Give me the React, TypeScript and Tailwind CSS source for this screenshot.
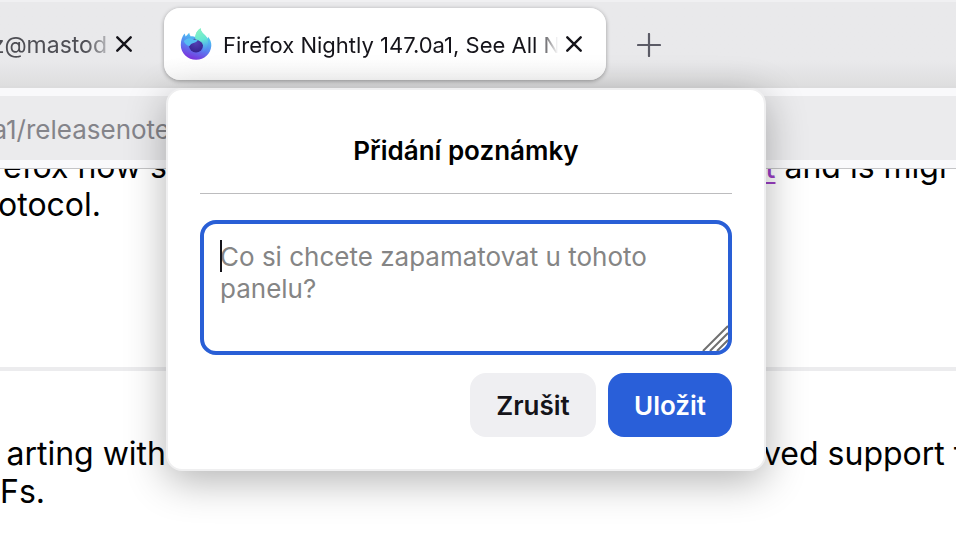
import React, { useState } from "react";

function FirefoxLogo() {
  return (
    <svg viewBox="0 0 32 32" className="h-8 w-8 shrink-0" aria-hidden="true">
      <defs>
        <linearGradient id="ring" x1="0.8" y1="0" x2="0.45" y2="1">
          <stop offset="0" stopColor="#62ecd0" />
          <stop offset="0.35" stopColor="#4fb8f2" />
          <stop offset="0.65" stopColor="#5a7df0" />
          <stop offset="1" stopColor="#7b34dd" />
        </linearGradient>
        <linearGradient id="flame" x1="0.4" y1="0" x2="0.6" y2="1">
          <stop offset="0" stopColor="#8af5c0" />
          <stop offset="0.5" stopColor="#66e6d4" />
          <stop offset="1" stopColor="#4a9cf5" stopOpacity="0.2" />
        </linearGradient>
        <radialGradient id="globe" cx="0.5" cy="0.3" r="0.75">
          <stop offset="0" stopColor="#5340b4" />
          <stop offset="1" stopColor="#33208c" />
        </radialGradient>
      </defs>
      <path
        d="M4.500 5.500c.5 1 .9 2 1.100 3C6.700 7.400 8 6 9.200 4.800c.2 1.500.7 2.700 1.600 3.600 1.600-.2 3.100 0 4.600.5.2-3.400 2-6.700 5.200-8.700.2 3.200 2.200 5 4.400 7 1.200 1.100 2 2.300 2.500 3.500l.5-2c2.200 2.400 3.600 5.600 3.300 9.400C30.700 26 24.300 31.800 16.200 31.800 7.600 31.800.8 25.300.8 17c0-4.600 1.200-8.500 3.700-11.500z"
        fill="url(#ring)"
      />
      <circle cx="16" cy="17.500" r="7" fill="url(#globe)" />
      <path
        d="M20.600.2c.2 3.200 2.200 5 4.400 7 3.800 3.700 4.200 9.800.2 14.800-1.200 1.400-2.400 2-3.400 2.300 1.700-2.200 2-5 1-7.500-1.300-3.200-4-4.600-7.400-5.200-.8-3.700.6-8.700 5.200-11.400z"
        fill="url(#flame)"
      />
      <path
        d="M3.800 13c2.700-2.800 6-3.800 9.500-1.800 1.500.8 3.200.9 4.500.6-.3 1.800-2.200 2.700-4.300 3.100-2 .4-3 1.300-4 3.100-2.700-.5-4.900-2.300-5.700-5z"
        fill="#56bdf2"
      />
    </svg>
  );
}

function CloseIcon() {
  return (
    <svg
      viewBox="0 0 16 16"
      className="h-4 w-4"
      fill="none"
      stroke="#15141a"
      strokeWidth="2.4"
      strokeLinecap="round"
      aria-hidden="true"
    >
      <path d="M1.300 1.300l13.400 13.400M14.700 1.300L1.300 14.700" />
    </svg>
  );
}

function PlusIcon() {
  return (
    <svg
      viewBox="0 0 24 24"
      className="h-6 w-6"
      fill="none"
      stroke="#5b5b66"
      strokeWidth="2.200"
      strokeLinecap="round"
      aria-hidden="true"
    >
      <path d="M12 1v22M1 12h22" />
    </svg>
  );
}

function TabBar() {
  return (
    <div className="flex h-[88px] items-center border-y-2 border-t-[#f0f0f2] border-b-[#dcdcdd] bg-linear-to-b from-[#e9e9eb] from-70% to-[#dededf]">
      <div className="flex w-[164px] shrink-0 items-center">
        <div className="flex w-[107px] justify-end overflow-hidden pt-0.5 whitespace-nowrap mask-r-from-80% mask-r-to-110% text-[23px] text-[#4e4e54]">
          z@mastod
        </div>
        <button aria-label="Zavřít panel" className="ml-2 p-px">
          <CloseIcon />
        </button>
      </div>
      <div className="flex h-[72px] w-[442px] shrink-0 items-center rounded-2xl bg-linear-to-b from-white from-70% to-[#f8f8f8] pl-4 shadow-[0_1px_4px_rgba(0,0,0,0.35)]">
        <FirefoxLogo />
        <div className="ml-[11px] w-[335px] overflow-hidden pt-0.5 whitespace-nowrap mask-r-from-94% text-[22px] text-[#15141a]">
          Firefox Nightly 147.0a1, See All N
        </div>
        <button aria-label="Zavřít panel" className="ml-2">
          <CloseIcon />
        </button>
      </div>
      <button aria-label="Nový panel" className="ml-[31px] pt-0.5">
        <PlusIcon />
      </button>
    </div>
  );
}

function AddressBar() {
  return (
    <div className="border-b border-[#c4c4c6] bg-[#f9f9fb] py-2">
      <div className="flex h-16 items-center bg-[#ebebed] pt-0.5">
        <div className="flex w-[170px] justify-end overflow-hidden whitespace-nowrap text-[26px] text-[#84848a]">
          a1/releasenote
        </div>
      </div>
    </div>
  );
}

function ReleaseNotes() {
  return (
    <main className="overflow-hidden text-[32px] leading-[38px] whitespace-nowrap text-black">
      <section className="-mt-[21px] h-[223px] border-b-4 border-[#ececee]">
        <div className="flex">
          <p className="flex w-[167px] shrink-0 justify-end">efox now s</p>
          <p className="ml-[598px]">
            <a
              href="#support"
              className="text-[#9a3fc4] underline decoration-2 underline-offset-4"
            >
              t
            </a>{" "}
            and is migr
          </p>
        </div>
        <p className="flex w-[101px] justify-end">otocol.</p>
      </section>
      <section className="pt-[64px]">
        <div className="flex">
          <p className="flex w-[166px] shrink-0 justify-end">arting with</p>
          <p className="ml-[597px]">ved support f</p>
        </div>
        <p className="flex w-[45px] justify-end">Fs.</p>
      </section>
    </main>
  );
}

function NotePanel() {
  const [note, setNote] = useState("");

  return (
    <div
      role="dialog"
      aria-labelledby="note-title"
      className="absolute top-[88px] left-[166px] w-[600px] rounded-2xl border-2 border-[#efeff0] bg-white px-8 pb-8 shadow-[0_10px_40px_rgba(0,0,0,0.3)]"
    >
      <h1
        id="note-title"
        className="border-b border-[#bcbcbe] pt-[45px] pb-[26px] text-center text-[26px] leading-8 font-semibold text-black"
      >
        Přidání poznámky
      </h1>
      <div className="relative mt-[26px]">
        <textarea
          aria-labelledby="note-title"
          value={note}
          onChange={(e) => setNote(e.target.value)}
          placeholder="Co si chcete zapamatovat u tohoto panelu?"
          className="block h-[135px] w-full resize-none rounded-2xl border-4 border-[#295fd6] bg-white px-4 py-[17px] text-[26px] leading-8 text-[#15141a] outline-none placeholder:text-[#858585]"
        />
        {/* text caret */}
        <span className="absolute top-5 left-5 h-8 w-0.5 bg-[#15141a]" />
        <svg
          viewBox="0 0 26 26"
          className="absolute right-1 bottom-1 h-[26px] w-[26px]"
          fill="none"
          stroke="#707070"
          strokeWidth="2"
          aria-hidden="true"
        >
          <path d="M1 26L26 1M8 26L26 8M15 26L26 15" />
        </svg>
      </div>
      <div className="mt-[18px] flex justify-end gap-3 text-[26px] font-semibold">
        <button className="h-16 w-[126px] rounded-2xl bg-[#efeff2] text-[#15141a]">
          Zrušit
        </button>
        <button className="h-16 w-[124px] rounded-2xl bg-[#295fd9] text-white">
          Uložit
        </button>
      </div>
    </div>
  );
}

export default function App() {
  return (
    <div className="relative min-h-screen overflow-hidden bg-white font-['Inter',sans-serif]">
      <TabBar />
      <AddressBar />
      <ReleaseNotes />
      <NotePanel />
    </div>
  );
}
